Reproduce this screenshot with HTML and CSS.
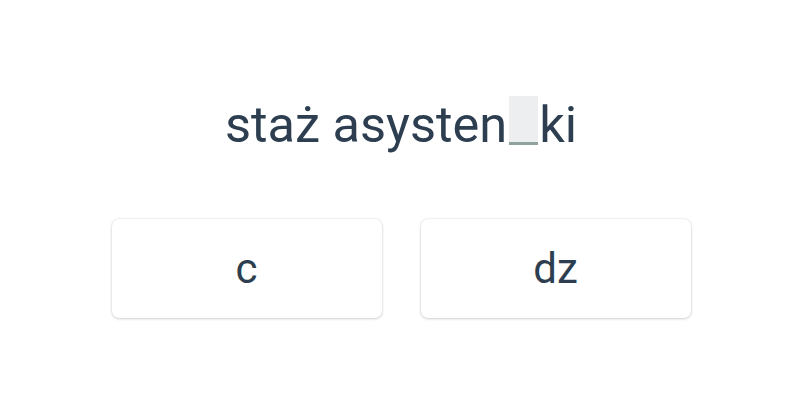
FILE: index.html
```html
<!DOCTYPE html>
<html lang="pl">
<head>
    <meta charset="UTF-8">
    <meta name="viewport" content="width=device-width, initial-scale=1.0">
    <title>Uzupełnij lukę</title>
    <link rel="stylesheet" href="styles.css">
</head>
<body>
    <div class="quiz">
        <div class="question">staż asysten<span class="gap"></span>ki</div>
        <div class="answers">
            <button class="answer">c</button>
            <button class="answer">dz</button>
        </div>
    </div>
</body>
</html>
```

FILE: styles.css
```css
body, html {
    margin: 0;
    padding: 0;
    font-family: Roboto, "Liberation Sans", Arial, sans-serif;
    background-color: #fff;
    color: #2c3e50;
    height: 100%;
}
.quiz {
    display: flex;
    flex-direction: column;
    align-items: center;
    padding-top: 98px;
}
.question {
    font-size: 50.5px;
    line-height: 54px;
    height: 54px;
    display: flex;
    align-items: flex-start;
    padding-left: 2px;
}
.gap {
    display: inline-block;
    width: 29px;
    height: 46px;
    margin: -2px 1px 0 2px;
    background-color: #eceef0;
    border-bottom: 3px solid #8fa39c;
}
.answers {
    display: flex;
    gap: 39px;
    margin-top: 67px;
    padding-left: 2px;
}
.answer {
    width: 270px;
    height: 99px;
    background-color: #fff;
    border: none;
    border-radius: 7px;
    box-shadow: 0 0 2px rgba(0, 0, 0, 0.15), 0 1px 3px rgba(0, 0, 0, 0.15);
    font-family: inherit;
    font-size: 42px;
    color: #2c3e50;
    cursor: pointer;
    padding: 0;
}
```
